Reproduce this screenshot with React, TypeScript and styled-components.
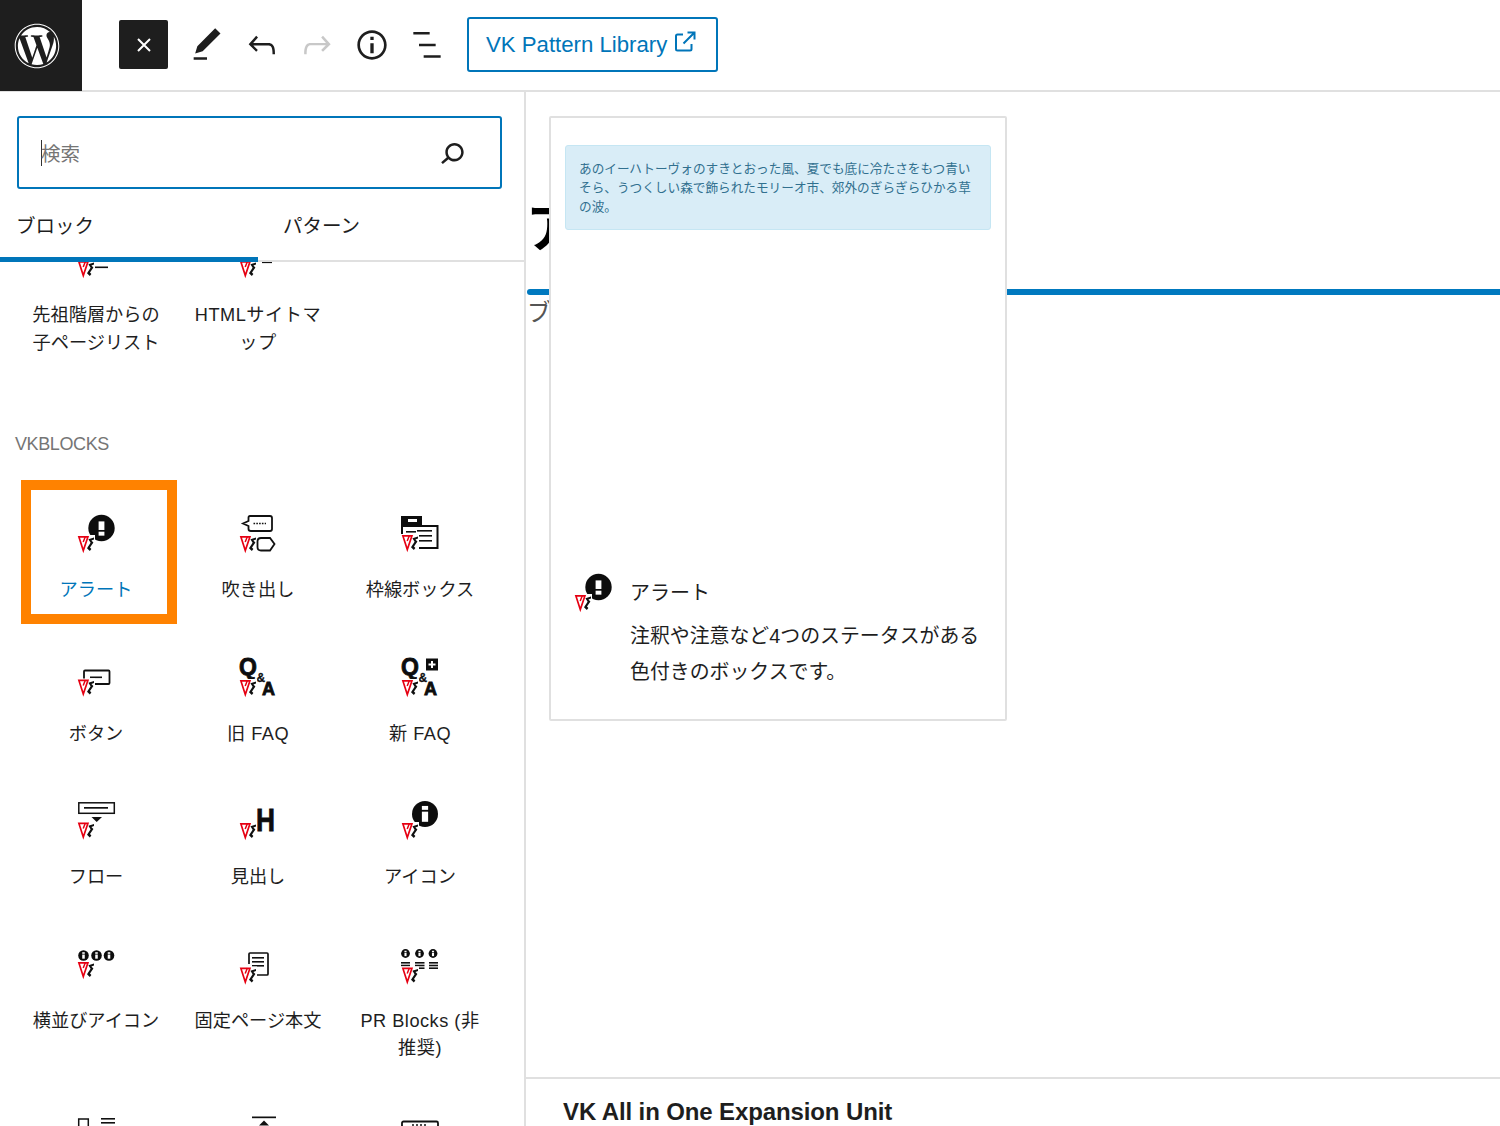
import { ReactNode } from "react";
import styled, { createGlobalStyle } from "styled-components";
import { FaWordpress } from "react-icons/fa";

const BLUE = "#0075b9";
const FONT = `"Liberation Sans", "Noto Sans CJK JP", sans-serif`;

const VkMark = ({ x = 2, y = 23 }: { x?: number; y?: number }) => (
  <g transform={`translate(${x} ${y})`}>
    <rect x="-1" y="-1" width="18" height="17.5" fill="#fff" />
    <path d="M0.9 0.9 L9.9 0.9 L5.3 14.6 Z" fill="#fff" stroke="#e60012" strokeWidth="1.7" strokeLinejoin="miter" />
    <path d="M5.2 6 L7.4 0.5" stroke="#e60012" strokeWidth="1.5" />
    <path d="M16 1.6 L10.4 3.2 L12.6 6.8 L9 12.2 L11.8 15 L13.4 13 L12 11.4 L15.4 6.6 L13.4 4.4 L16 3.6 Z" fill="#111" />
  </g>
);

const Lines = ({ x, ys, w }: { x: number; ys: number[]; w: number }) => (
  <>
    {ys.map((y) => (
      <rect key={y} x={x} y={y} width={w} height="1.6" fill="#111" />
    ))}
  </>
);

const Dot = ({ cx, cy, r, glyph }: { cx: number; cy: number; r: number; glyph: "i" | "!" }) => (
  <>
    <circle cx={cx} cy={cy} r={r} fill="#0d0d0d" />
    {glyph === "!" ? (
      <>
        <rect x={cx - r * 0.22} y={cy - r * 0.5} width={r * 0.44} height={r * 0.65} fill="#fff" />
        <rect x={cx - r * 0.22} y={cy + r * 0.28} width={r * 0.44} height={r * 0.3} fill="#fff" />
      </>
    ) : (
      <>
        <rect x={cx - r * 0.24} y={cy - r * 0.62} width={r * 0.48} height={r * 0.3} fill="#fff" />
        <rect x={cx - r * 0.24} y={cy - r * 0.18} width={r * 0.48} height={r * 0.78} fill="#fff" />
      </>
    )}
  </>
);

const boldText = {
  fontFamily: `"Liberation Sans", sans-serif`,
  fontWeight: 700,
  fill: "#0d0d0d",
  stroke: "#0d0d0d",
  strokeWidth: 0.8,
};

const QA = () => (
  <>
    <text x="1" y="18" fontSize="23" {...boldText}>Q</text>
    <text x="18.5" y="25" fontSize="12" {...boldText} strokeWidth={0.3}>&amp;</text>
    <text x="24" y="38" fontSize="18" {...boldText}>A</text>
  </>
);

const drawings: Record<string, ReactNode> = {
  ancestor: (
    <>
      <rect x="17" y="28.5" width="15" height="1.6" fill="#111" />
      <VkMark />
    </>
  ),
  sitemap: (
    <>
      <rect x="24" y="23.5" width="10" height="1.6" fill="#111" />
      <VkMark />
    </>
  ),
  alert: (
    <>
      <Dot cx={25.5} cy={15} r={13.2} glyph="!" />
      <VkMark />
    </>
  ),
  balloon: (
    <>
      <path d="M10.5 4.5 Q10.5 3 12 3 L32 3 Q34 3 34 5 L34 16 Q34 18 32 18 L13 18 Q10.5 18 10.5 16 L10.5 13 L5 10.5 L10.5 8 Z" fill="#fff" stroke="#111" strokeWidth="1.8" />
      <path d="M15.5 10.5 H28" stroke="#111" strokeWidth="1.7" strokeDasharray="1.6 1.2" />
      <VkMark />
      <path d="M23 25 H32 L36.5 31 L32 37.5 H23 Q19.5 37.5 19.5 34 V28.5 Q19.5 25 23 25 Z" fill="#fff" stroke="#111" strokeWidth="1.8" />
    </>
  ),
  frame: (
    <>
      <rect x="1" y="3" width="21" height="11" fill="#0d0d0d" />
      <rect x="8" y="6" width="9" height="3" fill="#fff" />
      <rect x="2" y="13" width="35.5" height="22" fill="#fff" stroke="#0d0d0d" strokeWidth="2" />
      <Lines x={17} ys={[17, 22, 27]} w={15} />
      <rect x="6" y="18" width="10" height="1.6" fill="#111" />
      <VkMark y={22} />
    </>
  ),
  button: (
    <>
      <path d="M8 25 V14.5 Q8 13.5 9 13.5 L32.5 13.5 Q33.5 13.5 33.5 14.5 V26 Q33.5 27 32.5 27 L16 27" fill="none" stroke="#111" strokeWidth="1.8" />
      <rect x="14" y="19.5" width="12" height="1.6" fill="#111" />
      <VkMark y={22.5} />
    </>
  ),
  oldFaq: (
    <>
      <QA />
      <VkMark y={23} />
    </>
  ),
  newFaq: (
    <>
      <QA />
      <rect x="26" y="1.5" width="12" height="12" fill="#0d0d0d" />
      <path d="M32 4 V11 M28.5 7.5 H35.5" stroke="#fff" strokeWidth="2" />
      <VkMark y={23} />
    </>
  ),
  flow: (
    <>
      <rect x="2.8" y="2.8" width="35.5" height="10.5" fill="#fff" stroke="#111" strokeWidth="1.5" />
      <rect x="8" y="7" width="24" height="1.7" fill="#111" />
      <path d="M15.5 17 H26 L20.7 22 Z" fill="#111" />
      <VkMark y={22.5} />
    </>
  ),
  heading: (
    <>
      <text x="18" y="31" fontSize="32" textLength="19" lengthAdjust="spacingAndGlyphs" {...boldText}>H</text>
      <VkMark y={23} />
    </>
  ),
  icon: (
    <>
      <Dot cx={25} cy={14} r={13} glyph="i" />
      <VkMark y={23} />
    </>
  ),
  iconRow: (
    <>
      <Dot cx={7.5} cy={11.5} r={5.3} glyph="i" />
      <Dot cx={20.5} cy={11.5} r={5.3} glyph="i" />
      <Dot cx={33} cy={11.5} r={5.3} glyph="i" />
      <VkMark y={18} />
    </>
  ),
  page: (
    <>
      <path d="M11 20 V10 Q11 9 12 9 H29 Q30 9 30 10 V30 Q30 31 29 31 H16" fill="none" stroke="#111" strokeWidth="1.7" />
      <Lines x={14} ys={[13, 17, 21]} w={12} />
      <VkMark y={23.5} />
    </>
  ),
  pr: (
    <>
      <Dot cx={5.5} cy={9.5} r={4.4} glyph="i" />
      <Dot cx={19.5} cy={9.5} r={4.4} glyph="i" />
      <Dot cx={33} cy={9.5} r={4.4} glyph="i" />
      <Lines x={1} ys={[18, 20.7, 23.4]} w={9} />
      <Lines x={15} ys={[18, 20.7, 23.4]} w={9.5} />
      <Lines x={29} ys={[18, 20.7, 23.4]} w={9} />
      <VkMark y={23.5} />
    </>
  ),
  media: (
    <>
      <rect x="2.7" y="4" width="9.6" height="12" fill="#fff" stroke="#111" strokeWidth="1.5" />
      <Lines x={25} ys={[3, 7]} w={14} />
    </>
  ),
  pageTop: (
    <>
      <rect x="14" y="1.5" width="24" height="1.7" fill="#111" />
      <path d="M26 5.5 L31 10.5 H21 Z" fill="#111" />
    </>
  ),
  slider: (
    <>
      <rect x="2" y="6.5" width="36" height="12" rx="1.5" fill="#fff" stroke="#111" strokeWidth="1.8" />
      <path d="M12 10 H28" stroke="#111" strokeWidth="1.6" strokeDasharray="2 2" />
    </>
  ),
};

const BlockIcon = ({ name }: { name: string }) => (
  <IconSvg width="40" height="40" viewBox="0 0 40 40" aria-hidden="true">
    {drawings[name]}
  </IconSvg>
);

const ToolIcon = ({ d, muted }: { d: string; muted?: boolean }) => (
  <svg width="40" height="40" viewBox="0 0 24 24" fill={muted ? "#c8c8c8" : "#1e1e1e"} aria-hidden="true">
    <path d={d} />
  </svg>
);

const PEN = "M20.1 5.1L16.9 2 6.2 12.7l-1.3 4.4 4.5-1.3L20.1 5.1zM4 20.8h8v-1.5H4v1.5z";
const UNDO = "M18.3 11.7c-.6-.6-1.4-.9-2.3-.9H6.7l2.9-3.3-1.1-1-4.5 5L8.5 16l1-1-2.7-2.7H16c.5 0 .9.2 1.3.5 1 1 1 3.4 1 4.5v.3h1.5v-.2c0-1.5 0-4.3-1.5-5.7z";
const REDO = "M15.6 6.5l-1.1 1 2.9 3.3H8c-.9 0-1.7.3-2.3.9-1.4 1.5-1.4 4.2-1.4 5.6v.2h1.5v-.3c0-1.1 0-3.5 1-4.5.3-.3.7-.5 1.3-.5h9.2L14.5 15l1.1 1.1 4.6-4.6-4.6-5z";
const INFO = "M12 3.2c-4.8 0-8.8 3.9-8.8 8.8 0 4.8 3.9 8.8 8.8 8.8 4.8 0 8.8-3.9 8.8-8.8 0-4.8-4-8.8-8.8-8.8zm0 16c-4 0-7.2-3.3-7.2-7.2C4.8 8 8 4.8 12 4.8s7.2 3.3 7.2 7.2c0 4-3.2 7.2-7.2 7.2zM11 17h2v-6h-2v6zm0-8h2V7h-2v2z";
const LIST = "M3.8 4.2h9.8v1.5H3.8zM7.2 11.2h10v1.5h-10zM10 18.2h10.2v1.5H10z";
const SEARCH = "M13.5 6C10.5 6 8 8.5 8 11.5c0 1.1.3 2.1.9 3l-3.4 3 1 1.1 3.4-2.9c1 .9 2.2 1.4 3.6 1.4 3 0 5.5-2.5 5.5-5.5C19 8.5 16.5 6 13.5 6zm0 9.5c-2.2 0-4-1.8-4-4s1.8-4 4-4 4 1.8 4 4-1.8 4-4 4z";

type Block = { icon: string; label?: string; marked?: boolean; wide?: boolean };

const firstBlocks: Block[] = [
  { icon: "ancestor", label: "先祖階層からの\n子ページリスト" },
  { icon: "sitemap", label: "HTMLサイトマ\nップ", wide: true },
];

const vkBlocks: Block[] = [
  { icon: "alert", label: "アラート", marked: true },
  { icon: "balloon", label: "吹き出し" },
  { icon: "frame", label: "枠線ボックス" },
  { icon: "button", label: "ボタン" },
  { icon: "oldFaq", label: "旧 FAQ", wide: true },
  { icon: "newFaq", label: "新 FAQ", wide: true },
  { icon: "flow", label: "フロー" },
  { icon: "heading", label: "見出し" },
  { icon: "icon", label: "アイコン" },
  { icon: "iconRow", label: "横並びアイコン" },
  { icon: "page", label: "固定ページ本文" },
  { icon: "pr", label: "PR Blocks (非\n推奨)", wide: true },
  // last row is cut off by the window before its labels start
  { icon: "media" },
  { icon: "pageTop" },
  { icon: "slider" },
];

const BlockCell = ({ block }: { block: Block }) => (
  <BlockItem>
    {block.marked && <Highlight />}
    <BlockIcon name={block.icon} />
    {block.label && (
      <BlockLabel $active={block.marked} $wide={block.wide}>
        {block.label}
      </BlockLabel>
    )}
  </BlockItem>
);

export default function App() {
  return (
    <Page>
      <GlobalStyle />
      <TopBar>
        <Logo>
          <FaWordpress size={46} />
        </Logo>
        <CloseButton aria-label="close">
          <svg width="18" height="18" viewBox="0 0 18 18" aria-hidden="true">
            <path d="M3 3 L15 15 M15 3 L3 15" stroke="#fff" strokeWidth="2" />
          </svg>
        </CloseButton>
        <ToolGroup>
          <ToolButton><ToolIcon d={PEN} /></ToolButton>
          <ToolButton><ToolIcon d={UNDO} /></ToolButton>
          <ToolButton><ToolIcon d={REDO} muted /></ToolButton>
          <ToolButton><ToolIcon d={INFO} /></ToolButton>
          <ToolButton><ToolIcon d={LIST} /></ToolButton>
        </ToolGroup>
        <LibraryButton>
          VK Pattern Library
          <svg width="22" height="22" viewBox="0 0 22 22" fill="none" stroke={BLUE} strokeWidth="2" aria-hidden="true">
            <path d="M9 3.5 H3.5 Q2 3.5 2 5 V18 Q2 19.5 3.5 19.5 H16 Q17.5 19.5 17.5 18 V13" />
            <path d="M13.5 1.5 H20.5 V8.5 M20.5 1.5 L9.5 12.5" />
          </svg>
        </LibraryButton>
      </TopBar>

      <Workspace>
        <Sidebar>
          <SearchBox>
            <Caret />
            <Placeholder>検索</Placeholder>
            <SearchIcon>
              <ToolIcon d={SEARCH} />
            </SearchIcon>
          </SearchBox>
          <Tabs>
            <Tab $active>ブロック</Tab>
            <Tab>パターン</Tab>
          </Tabs>
          <BlockList>
            <BlockGrid $clipped>
              {firstBlocks.map((block) => (
                <BlockCell key={block.icon} block={block} />
              ))}
            </BlockGrid>
            <GroupTitle>VKBLOCKS</GroupTitle>
            <BlockGrid>
              {vkBlocks.map((block) => (
                <BlockCell key={block.icon} block={block} />
              ))}
            </BlockGrid>
          </BlockList>
        </Sidebar>

        <Main>
          <Editor>
            <PostTitle>ア</PostTitle>
            <TitleRule />
            <PostText>ブ</PostText>
          </Editor>
          <MetaBoxes>VK All in One Expansion Unit</MetaBoxes>

          <Preview>
            <AlertBox>
              あのイーハトーヴォのすきとおった風、夏でも底に冷たさをもつ青いそら、うつくしい森で飾られたモリーオ市、郊外のぎらぎらひかる草の波。
            </AlertBox>
            <PreviewInfo>
              <BlockIcon name="alert" />
              <PreviewText>
                <PreviewTitle>アラート</PreviewTitle>
                <PreviewDescription>
                  注釈や注意など4つのステータスがある色付きのボックスです。
                </PreviewDescription>
              </PreviewText>
            </PreviewInfo>
          </Preview>
        </Main>
      </Workspace>
    </Page>
  );
}

const GlobalStyle = createGlobalStyle`
  html, body {
    margin: 0;
    padding: 0;
    background: #fff;
    overflow: hidden;
  }
  * {
    box-sizing: border-box;
  }
`;

const Page = styled.div`
  width: 1500px;
  height: 1126px;
  display: flex;
  flex-direction: column;
  overflow: hidden;
  font-family: ${FONT};
  color: #1e1e1e;
`;

const IconSvg = styled.svg`
  flex: none;
  overflow: visible;
`;

const TopBar = styled.header`
  flex: none;
  height: 92px;
  padding-bottom: 1px;
  display: flex;
  align-items: center;
  border-bottom: 2px solid #e0e0e0;
`;

const Logo = styled.div`
  align-self: flex-start;
  width: 82px;
  height: 91px;
  padding-left: 14px;
  display: flex;
  align-items: center;
  background: #1e1e1e;
  color: #fff;
`;

const CloseButton = styled.button`
  width: 49px;
  height: 49px;
  margin: 0 0 0 37px;
  padding: 0;
  display: flex;
  align-items: center;
  justify-content: center;
  background: #1e1e1e;
  border: none;
  border-radius: 2px;
`;

const ToolGroup = styled.div`
  display: flex;
  margin-left: 11px;
`;

const ToolButton = styled.div`
  width: 55px;
  display: flex;
  justify-content: center;
`;

const LibraryButton = styled.div`
  width: 251px;
  height: 55px;
  margin-left: 13px;
  padding: 0 0 0 17px;
  display: flex;
  align-items: center;
  gap: 7px;
  border: 2px solid ${BLUE};
  border-radius: 3px;
  color: ${BLUE};
  font-size: 22.2px;
  white-space: nowrap;

  > svg {
    margin-top: -5px;
  }
`;

const Workspace = styled.div`
  flex: 1;
  min-height: 0;
  display: flex;
`;

const Sidebar = styled.aside`
  flex: none;
  width: 526px;
  padding-top: 24px;
  display: flex;
  flex-direction: column;
  border-right: 2px solid #e0e0e0;
`;

const SearchBox = styled.div`
  flex: none;
  width: 485px;
  height: 73px;
  margin-left: 17px;
  padding: 0 30px 0 22px;
  display: flex;
  align-items: center;
  border: 2px solid ${BLUE};
  border-radius: 3px;
`;

const Caret = styled.span`
  width: 1px;
  height: 26px;
  background: #333;
`;

const Placeholder = styled.span`
  flex: 1;
  margin-left: -1px;
  font-size: 19.5px;
  color: #757575;
`;

const SearchIcon = styled.span`
  display: flex;
  margin-right: -2px;
`;

const Tabs = styled.div`
  flex: none;
  height: 73px;
  display: flex;
  border-bottom: 2px solid #e0e0e0;
`;

const Tab = styled.div<{ $active?: boolean }>`
  flex: none;
  width: 258px;
  height: 73px;
  padding: 20px 0 0 ${(p) => (p.$active ? "16px" : "25px")};
  border-bottom: 5px solid ${(p) => (p.$active ? BLUE : "transparent")};
  font-size: 19.5px;
  line-height: 34px;
`;

const BlockList = styled.div`
  flex: 1;
  min-height: 0;
  overflow: hidden;
`;

const BlockGrid = styled.div<{ $clipped?: boolean }>`
  display: grid;
  grid-template-columns: repeat(3, 162px);
  padding-left: 15px;
  margin-top: ${(p) => (p.$clipped ? "-57px" : "0")};
`;

const BlockItem = styled.div`
  position: relative;
  padding: 33px 0 19px;
  display: flex;
  flex-direction: column;
  align-items: center;
`;

const Highlight = styled.div`
  position: absolute;
  left: 6px;
  top: 0;
  width: 156px;
  height: 144px;
  border: 10px solid #ff8200;
`;

const BlockLabel = styled.div<{ $active?: boolean; $wide?: boolean }>`
  margin-top: 24px;
  font-size: 18.2px;
  line-height: 27.5px;
  text-align: center;
  white-space: pre-line;
  letter-spacing: ${(p) => (p.$wide ? "0.5px" : "0")};
  color: ${(p) => (p.$active ? BLUE : "#1e1e1e")};
`;

const GroupTitle = styled.div`
  height: 104px;
  padding: 56px 0 0 15px;
  font-size: 18px;
  line-height: 24px;
  letter-spacing: -0.4px;
  color: #757575;
`;

const Main = styled.main`
  position: relative;
  flex: 1;
  min-width: 0;
  display: flex;
  flex-direction: column;
`;

const Editor = styled.div`
  flex: 1;
  padding-top: 99px;
`;

const PostTitle = styled.h1`
  margin: 0;
  font-size: 52px;
  line-height: 76px;
  font-weight: 700;
  color: #000;
`;

const TitleRule = styled.div`
  height: 6px;
  margin: 22px 0 0 1px;
  background: #0079bf;
  border-radius: 3px 0 0 3px;
`;

const PostText = styled.p`
  margin: 0;
  padding: 2px 0 0 1px;
  font-size: 24px;
  line-height: 32px;
  color: #555;
`;

const MetaBoxes = styled.div`
  flex: none;
  height: 49px;
  padding: 17px 0 0 37px;
  border-top: 2px solid #e0e0e0;
  font-size: 24px;
  line-height: 32px;
  letter-spacing: -0.12px;
  font-weight: 700;
  color: #1e1e1e;
  white-space: nowrap;
`;

const Preview = styled.div`
  position: absolute;
  left: 23px;
  top: 24px;
  width: 458px;
  height: 605px;
  padding: 27px 14px 30px 14px;
  display: flex;
  flex-direction: column;
  justify-content: space-between;
  background: #fff;
  border: 2px solid #e0e0e0;
  border-radius: 2px;
`;

const AlertBox = styled.div`
  height: 85px;
  padding: 14px 13px 0;
  background: #d9edf7;
  border: 1px solid #c5e6f3;
  border-radius: 3px;
  font-size: 12.65px;
  line-height: 19px;
  color: #31708f;
`;

const PreviewInfo = styled.div`
  display: flex;
  align-items: flex-start;
  gap: 17px;
  padding-left: 8px;
`;

const PreviewText = styled.div`
  flex: 1;
  padding-top: 3px;
  margin-bottom: -1px;
`;

const PreviewTitle = styled.div`
  font-size: 20px;
  line-height: 36px;
`;

const PreviewDescription = styled.div`
  margin-top: 7px;
  font-size: 19.9px;
  line-height: 36px;
`;
